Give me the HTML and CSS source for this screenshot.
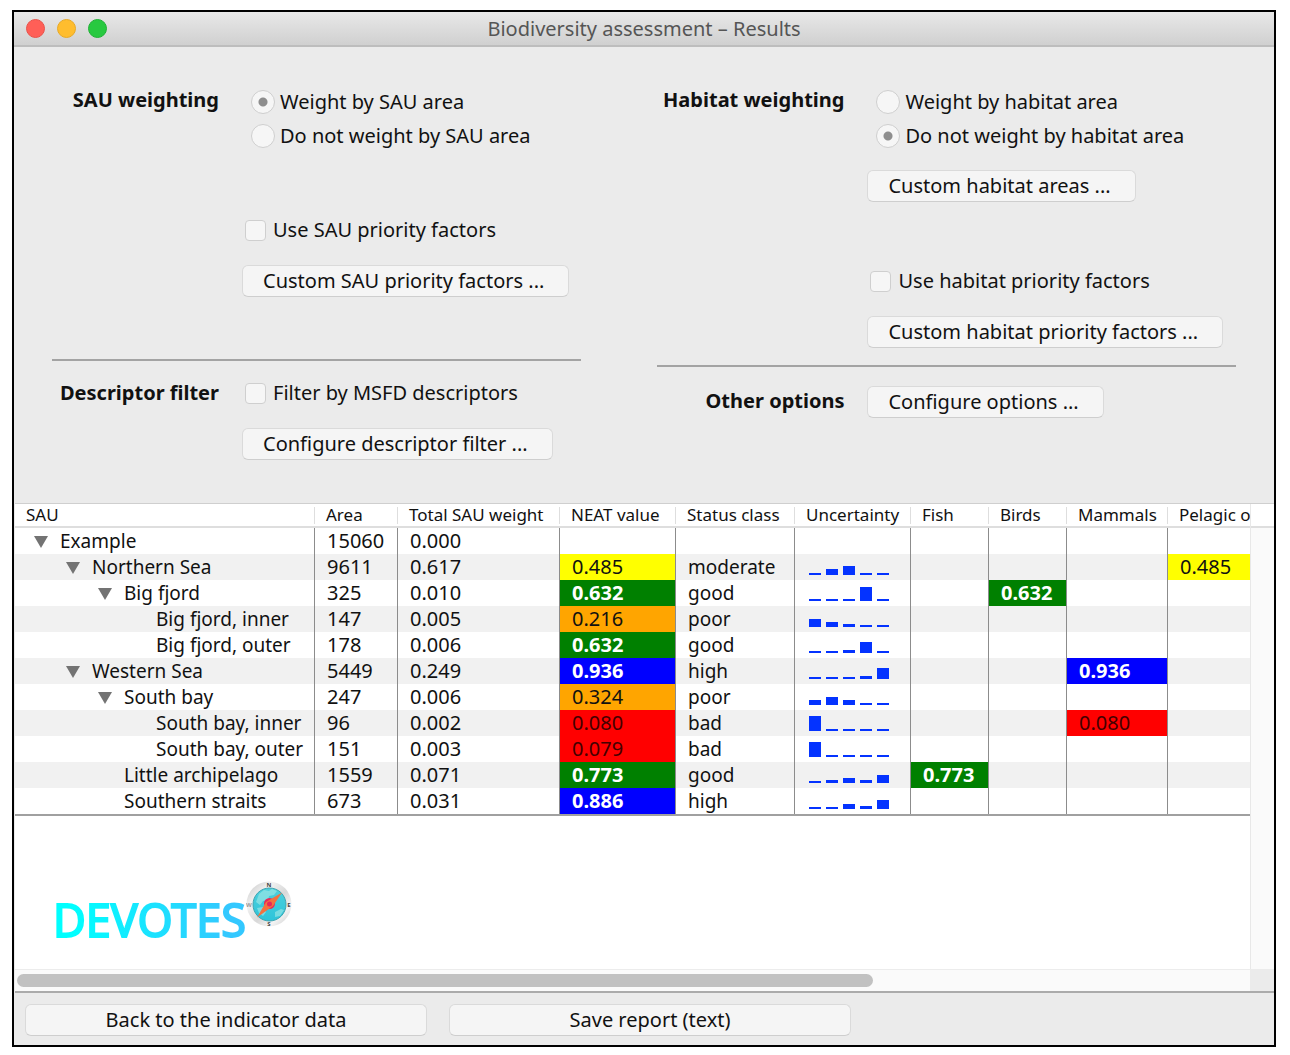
FILE: index.html
```html
<!DOCTYPE html>
<html lang="en">
<head>
<meta charset="utf-8">
<title>Biodiversity assessment – Results</title>
<link rel="stylesheet" href="styles.css">
</head>
<body>
<main class="window">
  <header class="titlebar">
    <div class="lights">
      <button class="light close" type="button" aria-label="Close"></button>
      <button class="light minimize" type="button" aria-label="Minimize"></button>
      <button class="light zoom" type="button" aria-label="Zoom"></button>
    </div>
    <h1 class="title">Biodiversity assessment – Results</h1>
  </header>

  <form class="settings">
    <div class="column column-sau">
      <section class="group">
        <h2 class="group-label">SAU weighting</h2>
        <div class="controls">
          <label class="radio"><input type="radio" name="sau" checked>Weight by SAU area</label>
          <label class="radio"><input type="radio" name="sau">Do not weight by SAU area</label>
          <label class="check apart"><input type="checkbox">Use SAU priority factors</label>
          <button class="push" type="button">Custom SAU priority factors ...</button>
        </div>
      </section>
      <hr class="rule">
      <section class="group">
        <h2 class="group-label">Descriptor filter</h2>
        <div class="controls">
          <label class="check"><input type="checkbox">Filter by MSFD descriptors</label>
          <button class="push" type="button">Configure descriptor filter ...</button>
        </div>
      </section>
    </div>
    <div class="column column-habitat">
      <section class="group">
        <h2 class="group-label">Habitat weighting</h2>
        <div class="controls">
          <label class="radio"><input type="radio" name="habitat">Weight by habitat area</label>
          <label class="radio"><input type="radio" name="habitat" checked>Do not weight by habitat area</label>
          <button class="push" type="button">Custom habitat areas ...</button>
          <label class="check apart"><input type="checkbox">Use habitat priority factors</label>
          <button class="push" type="button">Custom habitat priority factors ...</button>
        </div>
      </section>
      <hr class="rule">
      <section class="group">
        <h2 class="group-label">Other options</h2>
        <div class="controls">
          <button class="push" type="button">Configure options ...</button>
        </div>
      </section>
    </div>
  </form>

  <section class="results">
    <div class="viewport">
      <table class="tree">
        <colgroup>
          <col class="c-sau"><col class="c-area"><col class="c-weight"><col class="c-neat"><col class="c-status"><col class="c-unc"><col class="c-fish"><col class="c-fish"><col class="c-mammals"><col class="c-pelagic">
        </colgroup>
        <thead>
          <tr><th>SAU</th><th>Area</th><th>Total SAU weight</th><th>NEAT value</th><th>Status class</th><th>Uncertainty</th><th>Fish</th><th>Birds</th><th>Mammals</th><th>Pelagic organisms</th></tr>
        </thead>
        <tbody>
          <tr><td class="name level-0 open">Example</td><td>15060</td><td>0.000</td><td></td><td></td><td></td><td></td><td></td><td></td><td></td></tr>
          <tr><td class="name level-1 open">Northern Sea</td><td>9611</td><td>0.617</td><td class="moderate">0.485</td><td class="name">moderate</td><td><div class="bars"><i style="height:2px"></i><i style="height:6px"></i><i style="height:9px"></i><i style="height:2px"></i><i style="height:2px"></i></div></td><td></td><td></td><td></td><td class="moderate">0.485</td></tr>
          <tr><td class="name level-2 open">Big fjord</td><td>325</td><td>0.010</td><td class="good">0.632</td><td class="name">good</td><td><div class="bars"><i style="height:2px"></i><i style="height:2px"></i><i style="height:2px"></i><i style="height:14px"></i><i style="height:2px"></i></div></td><td></td><td class="good">0.632</td><td></td><td></td></tr>
          <tr><td class="name level-3">Big fjord, inner</td><td>147</td><td>0.005</td><td class="poor">0.216</td><td class="name">poor</td><td><div class="bars"><i style="height:8px"></i><i style="height:5px"></i><i style="height:3px"></i><i style="height:1px"></i><i style="height:1px"></i></div></td><td></td><td></td><td></td><td></td></tr>
          <tr><td class="name level-3">Big fjord, outer</td><td>178</td><td>0.006</td><td class="good">0.632</td><td class="name">good</td><td><div class="bars"><i style="height:1px"></i><i style="height:1px"></i><i style="height:3px"></i><i style="height:11px"></i><i style="height:1px"></i></div></td><td></td><td></td><td></td><td></td></tr>
          <tr><td class="name level-1 open">Western Sea</td><td>5449</td><td>0.249</td><td class="high">0.936</td><td class="name">high</td><td><div class="bars"><i style="height:1px"></i><i style="height:1px"></i><i style="height:1px"></i><i style="height:3px"></i><i style="height:11px"></i></div></td><td></td><td></td><td class="high">0.936</td><td></td></tr>
          <tr><td class="name level-2 open">South bay</td><td>247</td><td>0.006</td><td class="poor">0.324</td><td class="name">poor</td><td><div class="bars"><i style="height:5px"></i><i style="height:8px"></i><i style="height:5px"></i><i style="height:1px"></i><i style="height:1px"></i></div></td><td></td><td></td><td></td><td></td></tr>
          <tr><td class="name level-3">South bay, inner</td><td>96</td><td>0.002</td><td class="bad">0.080</td><td class="name">bad</td><td><div class="bars"><i style="height:15px"></i><i style="height:1px"></i><i style="height:1px"></i><i style="height:1px"></i><i style="height:1px"></i></div></td><td></td><td></td><td class="bad">0.080</td><td></td></tr>
          <tr><td class="name level-3">South bay, outer</td><td>151</td><td>0.003</td><td class="bad">0.079</td><td class="name">bad</td><td><div class="bars"><i style="height:15px"></i><i style="height:1px"></i><i style="height:1px"></i><i style="height:1px"></i><i style="height:1px"></i></div></td><td></td><td></td><td></td><td></td></tr>
          <tr><td class="name level-2">Little archipelago</td><td>1559</td><td>0.071</td><td class="good">0.773</td><td class="name">good</td><td><div class="bars"><i style="height:1px"></i><i style="height:3px"></i><i style="height:5px"></i><i style="height:3px"></i><i style="height:8px"></i></div></td><td class="good">0.773</td><td></td><td></td><td></td></tr>
          <tr><td class="name level-2">Southern straits</td><td>673</td><td>0.031</td><td class="high">0.886</td><td class="name">high</td><td><div class="bars"><i style="height:1px"></i><i style="height:1px"></i><i style="height:5px"></i><i style="height:3px"></i><i style="height:9px"></i></div></td><td></td><td></td><td></td><td></td></tr>
        </tbody>
      </table>
      <div class="brand">
        <span class="brand-name">DEVOTES</span>
        <svg class="compass" viewBox="0 0 46 46" width="46" height="46" role="img" aria-label="Compass">
          <defs>
            <linearGradient id="rim" x1="0" y1="0" x2="1" y2="1">
              <stop offset="0" stop-color="#c4c4c4"/><stop offset=".3" stop-color="#f2f2f2"/><stop offset=".55" stop-color="#d8d8d8"/><stop offset=".75" stop-color="#f4f4f4"/><stop offset="1" stop-color="#c6c6c6"/>
            </linearGradient>
            <linearGradient id="sea" x1="0" y1="0" x2="0" y2="1">
              <stop offset="0" stop-color="#4fd0dc"/><stop offset="1" stop-color="#2cc4da"/>
            </linearGradient>
          </defs>
          <circle cx="23" cy="23" r="22.500" fill="url(#rim)"/>
          <circle cx="23.500" cy="23.500" r="16.500" fill="url(#sea)" stroke="#3fa4b0"/>
          <path d="M13 13l5-4 5 1 3-2 5 2-3 4-5 1-1 4-5 1-3 4-4-3zM29 31l6-3 3 1-4 6-5 1zM11 27l6-1 3 5-3 4-4-3z" fill="#a5e9e6" opacity=".6"/>
          <circle cx="23.500" cy="22.500" r="5.500" fill="#e6285c"/>
          <path d="M36 11.500L27 25 11 36.500 20 21z" fill="#f4713f"/>
          <circle cx="23.500" cy="23" r="2.500" fill="#e6285c"/>
          <g font-size="6" font-weight="700" fill="#444" text-anchor="middle">
            <text x="23" y="6">N</text><text x="23" y="45">S</text><text x="3" y="26" fill="#999">W</text><text x="43" y="26">E</text>
          </g>
        </svg>
      </div>
    </div>
    <div class="side"><div class="side-head"></div></div>
    <div class="scroll-x"><div class="thumb"></div></div>
    <div class="corner"></div>
  </section>

  <footer class="actions">
    <button class="push" type="button">Back to the indicator data</button>
    <button class="push" type="button">Save report (text)</button>
  </footer>
</main>
</body>
</html>
```
FILE: styles.css
```css
* { box-sizing: border-box; }

body {
  margin: 0;
  background: #fff;
  color: #111;
  font: 20px/26px "Noto Sans", "Open Sans", sans-serif;
}

.window {
  display: flex;
  flex-direction: column;
  min-height: calc(100vh - 18px);
  margin: 10px 14px 8px 12px;
  border: 2px solid #000;
  background: #ebebeb;
}

/* Title bar */
.titlebar {
  display: grid;
  grid-template-columns: 100px 1fr 100px;
  align-items: center;
  height: 35px;
  padding: 0 12px;
  border-bottom: 2px solid #bdbdbd;
  background: linear-gradient(#e8e8e8, #d0d0d0);
}
.lights { display: flex; gap: 12px; }
.light {
  width: 19px;
  height: 19px;
  padding: 0;
  border: 1px solid;
  border-radius: 50%;
}
.close { background: #ff5f57; border-color: #e9524a; }
.minimize { background: #ffbd2e; border-color: #e8a925; }
.zoom { background: #28c940; border-color: #1fb235; }
.title {
  margin: 0;
  color: #555;
  font-size: 20px;
  font-weight: 400;
  text-align: center;
}

/* Settings form */
.settings {
  display: grid;
  grid-template-columns: 529fr 578fr;
  gap: 76px;
  padding: 38px 38px 43px 38px;
}
.group { display: grid; }
.column-sau .group { grid-template-columns: 167px 1fr; gap: 23px; }
.column-habitat .group { grid-template-columns: 187px 1fr; gap: 23px; }
.group-label {
  margin: 0;
  font-size: 20px;
  line-height: 30px;
  font-weight: 700;
  text-align: right;
  white-space: nowrap;
}
.controls {
  display: flex;
  flex-direction: column;
  align-items: flex-start;
  white-space: nowrap;
}
.radio, .check { display: flex; align-items: center; }
.radio { gap: 5px; height: 34px; padding-left: 9px; }
.check { gap: 7px; height: 30px; padding-left: 3px; }
.column-sau .apart { margin-top: 62px; }
.column-habitat .apart { margin-top: 64px; }
.controls .push { margin-top: 20px; }
.controls .radio + .push { margin-top: 17px; }
.controls .push:first-child { margin-top: 0; }

input {
  appearance: none;
  margin: 0;
  border: 1px solid #cfcfcf;
  background: #f6f6f6;
}
input[type="radio"] { width: 24px; height: 24px; border-radius: 50%; }
input[type="radio"]:checked {
  background: radial-gradient(circle, #8e8e8e 4px, #f6f6f6 5px);
}
input[type="checkbox"] { width: 21px; height: 21px; border-radius: 4px; }

.push {
  height: 32px;
  padding: 0 24px 0 20px;
  border: 1px solid #dadada;
  border-bottom-color: #cecece;
  border-radius: 6px;
  background: #f5f5f5;
  color: #111;
  font: inherit;
  line-height: 28px;
}
.rule {
  height: 2px;
  border: 0;
  background: #a3a3a3;
}
.column-sau .rule { margin: 62px 0 17px; }
.column-habitat .rule { margin: 17px 0 19px; }

/* Results tree */
.results {
  flex: 1;
  display: grid;
  grid-template-columns: minmax(0, 1fr) 24px;
  grid-template-rows: 1fr 22px;
  margin-left: 1px;
  border-top: 1px solid #cfcfcf;
  border-bottom: 2px solid #ababab;
}
.viewport { overflow: hidden; background: #fff; }
.tree {
  width: 100%;
  min-width: 1353px;
  table-layout: fixed;
  border-spacing: 0;
  border-bottom: 2px solid #a0a0a0;
}
.c-sau { width: 300px; }
.c-area { width: 83px; }
.c-weight { width: 162px; }
.c-neat, .c-unc { width: 116px; }
.c-status { width: 119px; }
.c-fish { width: 78px; }
.c-mammals { width: 101px; }
th {
  height: 24px;
  padding: 0 0 0 11px;
  border-bottom: 2px solid #dedede;
  background: linear-gradient(#dedede, #dedede) right center / 1px 17px no-repeat;
  font-size: 17px;
  font-weight: 400;
  line-height: 22px;
  text-align: left;
  white-space: nowrap;
}
td {
  height: 26px;
  padding: 0 0 0 12px;
  border-right: 1px solid #8c8c8c;
  line-height: 26px;
  white-space: nowrap;
}
tbody tr:nth-child(even) { background: #f1f1f1; }
.name { font-size: 19px; }
.level-0 { padding-left: 45px; }
.level-1 { padding-left: 77px; }
.level-2 { padding-left: 109px; }
.level-3 { padding-left: 141px; }
.open::before {
  content: "";
  display: inline-block;
  margin: 0 12px 0 -26px;
  border: 7px solid transparent;
  border-top: 12px solid #737373;
  border-bottom: 0;
}
.moderate { background: #ff0; }
.poor { background: #ffa500; }
.bad { background: #f00; color: #400; }
.good, .high { color: #fff; font-weight: 700; }
.good { background: #008000; }
.high { background: #00f; }

.bars {
  display: flex;
  align-items: flex-end;
  gap: 5px;
  height: 26px;
  padding: 0 0 5px 2px;
}
.bars i { width: 12px; min-height: 2px; background: #0433ff; }

.brand {
  display: flex;
  align-items: flex-start;
  padding: 65px 0 16px 38px;
}
.brand-name {
  padding-top: 9px;
  background: linear-gradient(90deg, #00ffff 10%, #33c8ff 90%);
  background-clip: text;
  -webkit-text-stroke: 2px transparent;
  color: transparent;
  font-size: 45px;
  line-height: 60px;
}
.compass { flex: none; }

.side { border-left: 1px solid #e8e8e8; background: #fafafa; }
.side-head {
  height: 24px;
  border-bottom: 2px solid #dedede;
  background: #fff;
}
.scroll-x {
  padding: 4px 2px;
  border-top: 1px solid #ececec;
  background: #fafafa;
}
.thumb {
  width: 856px;
  max-width: 70%;
  height: 13px;
  border-radius: 7px;
  background: #c1c1c1;
}

/* Bottom bar */
.actions {
  display: flex;
  gap: 22px;
  padding: 11px 11px 9px;
}
.actions .push { flex: 0 1 402px; padding: 0 20px; }
```
